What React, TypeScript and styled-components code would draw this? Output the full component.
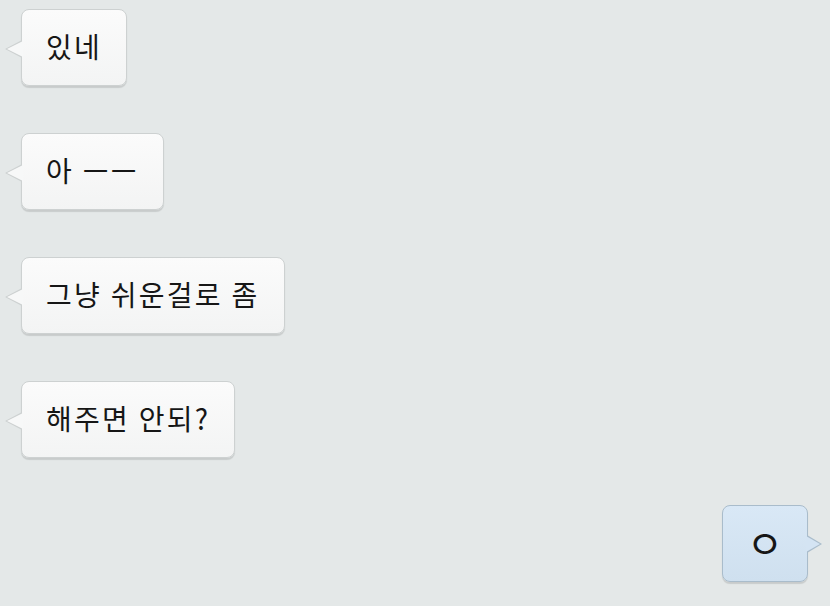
import styled, { createGlobalStyle, css } from "styled-components";

const GlobalStyle = createGlobalStyle`
  html, body {
    margin: 0;
    padding: 0;
    background: #e4e8e8;
  }
  body {
    font-family: "Noto Sans CJK KR", "Noto Sans", sans-serif;
  }
`;

type Side = "left" | "right";

const Thread = styled.div`
  width: 830px;
  height: 606px;
  box-sizing: border-box;
  padding: 9px 22px 0 21px;
  display: flex;
  flex-direction: column;
  gap: 47px;
  background: #e4e8e8;
  overflow: hidden;
`;

const Row = styled.div<{ $side: Side }>`
  display: flex;
  justify-content: ${(p) => (p.$side === "left" ? "flex-start" : "flex-end")};
`;

const Bubble = styled.div<{ $side: Side }>`
  position: relative;
  box-sizing: border-box;
  height: 77px;
  padding: 0 24px 3px 24px;
  display: flex;
  align-items: center;
  border-radius: 8px;
  font-size: 28px;
  font-weight: 400;
  color: #161616;
  letter-spacing: 2.3px;
  white-space: nowrap;

  ${(p) =>
    p.$side === "left"
      ? css`
          background: linear-gradient(#fbfbfb, #f3f4f4);
          border: 1px solid #cdd1d1;
          box-shadow: 0 2px 1px rgba(0, 0, 0, 0.12);
        `
      : css`
          width: 86px;
          padding: 0 0 4px 0;
          justify-content: center;
          font-size: 40px;
          letter-spacing: 0;
          background: linear-gradient(#d9e8f6, #cfe0ef);
          border: 1px solid #a9bccb;
          box-shadow: 0 2px 1px rgba(0, 0, 0, 0.12);
        `}

  &::before,
  &::after {
    content: "";
    position: absolute;
    top: 30px;
    width: 0;
    height: 0;
    border-top: 9px solid transparent;
    border-bottom: 9px solid transparent;
  }

  ${(p) =>
    p.$side === "left"
      ? css`
          &::before {
            left: -17px;
            border-right: 17px solid #cdd1d1;
          }
          &::after {
            left: -15px;
            top: 31px;
            border-top-width: 8px;
            border-bottom-width: 8px;
            border-right: 16px solid #f7f8f8;
          }
        `
      : css`
          &::before {
            right: -15px;
            top: 29px;
            border-left: 15px solid #a9bccb;
          }
          &::after {
            right: -13px;
            top: 30px;
            border-top-width: 8px;
            border-bottom-width: 8px;
            border-left: 14px solid #d4e4f3;
          }
        `}
`;

const messages: { side: Side; text: string }[] = [
  { side: "left", text: "있네" },
  { side: "left", text: "아 ㅡㅡ" },
  { side: "left", text: "그냥 쉬운걸로 좀" },
  { side: "left", text: "해주면 안되?" },
  { side: "right", text: "ㅇ" },
];

export default function App() {
  return (
    <>
      <GlobalStyle />
      <Thread>
        {messages.map((m, i) => (
          <Row key={i} $side={m.side}>
            <Bubble $side={m.side}>{m.text}</Bubble>
          </Row>
        ))}
      </Thread>
    </>
  );
}
